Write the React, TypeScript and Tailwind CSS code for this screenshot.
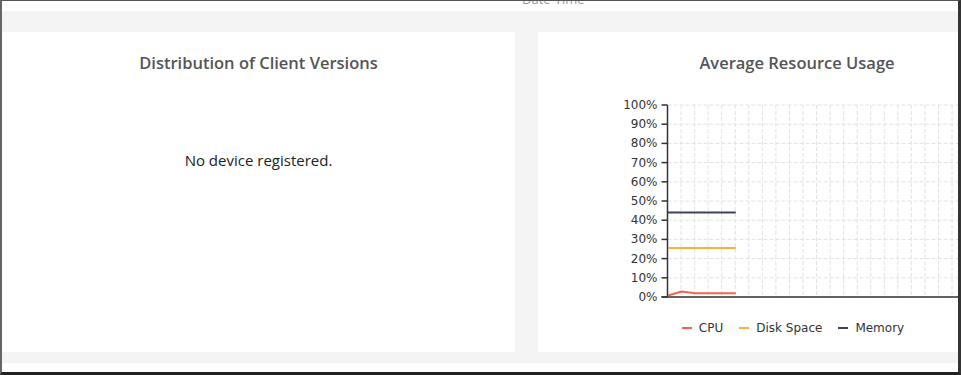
const PLOT_LEFT = 129.5
const PLOT_TOP = 32
const PLOT_BOTTOM = 224
const STEP_X = 13.55
const PLOT_RIGHT = 500

const yFor = (pct: number) => PLOT_BOTTOM - (pct / 100) * (PLOT_BOTTOM - PLOT_TOP)

const series = [
  { name: "CPU", color: "#f0674b", values: [0.8, 2.8, 2, 2, 2, 2] },
  { name: "Disk Space", color: "#fbb03b", values: [25.5, 25.5, 25.5, 25.5, 25.5, 25.5] },
  { name: "Memory", color: "#3b4556", values: [44, 44, 44, 44, 44, 44] },
]

// chart of resource usage, only the left part is visible in the crop
const UsageChart = () => {
  const ticks = [0, 10, 20, 30, 40, 50, 60, 70, 80, 90, 100]
  const vlines: number[] = []
  for (let x = PLOT_LEFT + STEP_X; x < PLOT_RIGHT; x += STEP_X) vlines.push(x)

  return (
    <svg width="518" height="240" className="block">
      {ticks.map((t) => (
        <line
          key={"h" + t}
          x1={PLOT_LEFT}
          x2={PLOT_RIGHT}
          y1={yFor(t)}
          y2={yFor(t)}
          stroke="#e2e2e2"
          strokeDasharray="4 2"
        />
      ))}
      {vlines.map((x) => (
        <line
          key={"v" + x}
          x1={x}
          x2={x}
          y1={PLOT_TOP}
          y2={PLOT_BOTTOM}
          stroke="#e2e2e2"
          strokeDasharray="4 2"
        />
      ))}
      {ticks.map((t) => (
        <g key={"t" + t}>
          <line x1={PLOT_LEFT - 6} x2={PLOT_LEFT} y1={yFor(t)} y2={yFor(t)} stroke="#333" strokeWidth="1.5" />
          <text
            x={PLOT_LEFT - 10}
            y={yFor(t) + 4}
            textAnchor="end"
            fontSize="12"
            fill="#333"
            fontFamily="'DejaVu Sans', sans-serif"
          >
            {t}%
          </text>
        </g>
      ))}
      <line x1={PLOT_LEFT} x2={PLOT_LEFT} y1={PLOT_TOP} y2={PLOT_BOTTOM} stroke="#333" strokeWidth="1.5" />
      <line x1={PLOT_LEFT - 6} x2={PLOT_RIGHT} y1={PLOT_BOTTOM} y2={PLOT_BOTTOM} stroke="#333" strokeWidth="1.5" />
      {series.map((s) => (
        <polyline
          key={s.name}
          fill="none"
          stroke={s.color}
          strokeWidth="2"
          points={s.values.map((v, i) => `${PLOT_LEFT + 0.5 + i * STEP_X},${yFor(v)}`).join(" ")}
        />
      ))}
    </svg>
  )
}

const Card = ({ title, children, width }: { title: string; children: React.ReactNode; width: string }) => (
  <div className={`${width} h-[320px] shrink-0 bg-white flex flex-col items-center`}>
    <h3 className="pt-[21px] text-[16.5px] leading-[20px] font-semibold text-[#555] font-['Open_Sans',sans-serif]">
      {title}
    </h3>
    {children}
  </div>
)

export default function App() {
  return (
    <div className="w-[961px] h-[375px] bg-white border-t border-t-[#555] border-l-2 border-l-[#666] border-r-[3px] border-r-[#333] border-b-[3px] border-b-[#222] overflow-hidden flex flex-col">
      <div className="h-[10px] shrink-0 overflow-hidden">
        <div className="-mt-[9px] pl-[520px] text-[13px] leading-[14px] text-[#999] font-['Open_Sans',sans-serif]">
          Date-Time
        </div>
      </div>
      <div className="h-[352px] shrink-0 bg-[#f4f4f4] pt-[21px] overflow-hidden">
        <div className="flex gap-[23px]">
          <Card title="Distribution of Client Versions" width="w-[513px]">
            <p className="mt-[77px] text-[15px] leading-[20px] text-[#222] font-['Open_Sans',sans-serif]">
              No device registered.
            </p>
          </Card>
          <Card title="Average Resource Usage" width="w-[518px]">
            <UsageChart />
            <div className="mt-[7px] flex items-center gap-[16px] pr-[8px] text-[12px] leading-[16px] text-[#333] font-['DejaVu_Sans',sans-serif]">
              {series.map((s) => (
                <div key={s.name} className="flex items-center gap-[7px]">
                  <span className="w-[10px] h-[2px]" style={{ backgroundColor: s.color }} />
                  <span>{s.name}</span>
                </div>
              ))}
            </div>
          </Card>
        </div>
      </div>
    </div>
  )
}
